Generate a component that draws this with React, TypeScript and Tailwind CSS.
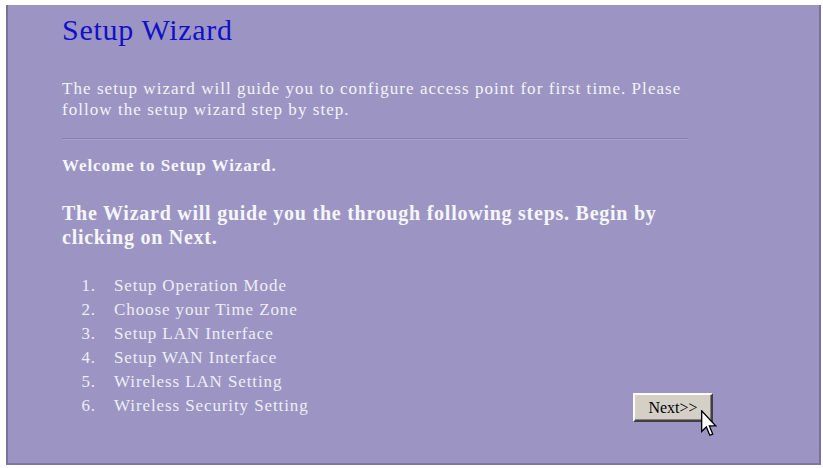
import React from "react";

const steps = [
  "Setup Operation Mode",
  "Choose your Time Zone",
  "Setup LAN Interface",
  "Setup WAN Interface",
  "Wireless LAN Setting",
  "Wireless Security Setting",
];

const Cursor = () => (
  <svg
    className="absolute left-[66px] top-[15px]"
    width="16"
    height="27"
    viewBox="0 0 12 20"
  >
    <path
      d="M0.5 0.5 L0.5 16 L4 12.6 L6.6 18.8 L8.8 17.9 L6.3 11.8 L11 11.8 Z"
      fill="#ffffff"
      stroke="#000000"
      strokeWidth="1"
      strokeLinejoin="miter"
    />
  </svg>
);

export default function App() {
  return (
    <div className="w-[823px] h-[468px] bg-white pt-[5px] pl-[6px] pr-[2px] pb-[3px] flex font-['Liberation_Serif',serif]">
      <div className="flex-1 bg-[#9c95c4] border-l-2 border-l-[#78739c] border-r-2 border-r-[#78739c] border-b-2 border-b-[#7d789f] pl-[54px] pr-[106px] pt-[10px] flex flex-col">
        <h1 className="text-[30px] leading-[30px] tracking-[0.7px] text-[#1010c8]">Setup Wizard</h1>

        <p className="mt-[33px] text-[17px] leading-[21px] tracking-[1.05px] text-[#f3f3f6]">
          The setup wizard will guide you to configure access point for first time. Please
          <br />
          follow the setup wizard step by step.
        </p>

        <div className="mt-[18px] w-[626px] h-[2px] bg-[#857fa9] border-b border-b-[#a9a3cf]" />

        <p className="mt-[15px] text-[17px] leading-[22px] tracking-[0.9px] font-bold text-[#f6f6f8]">
          Welcome to Setup Wizard.
        </p>

        <p className="mt-[24px] text-[20px] leading-[24px] tracking-[0.75px] font-bold text-[#f6f6f8]">
          The Wizard will guide you the through following steps. Begin by
          <br />
          clicking on Next.
        </p>

        <div className="mt-[25px] flex items-end">
          <ol className="flex flex-col text-[17px] leading-[24px] tracking-[0.9px] text-[#eeeef3]">
            {steps.map((step, i) => (
              <li key={step} className="flex">
                <span className="w-[52px] text-right pr-[18px]">{i + 1}.</span>
                <span>{step}</span>
              </li>
            ))}
          </ol>

          <button className="relative ml-auto -mb-[4px] w-[80px] h-[29px] bg-[#d4d0c8] border-2 border-t-white border-l-white border-r-[#404040] border-b-[#404040] shadow-[inset_-1px_-1px_0_#808080] text-[16px] text-black font-['Liberation_Serif',serif]">
            Next&gt;&gt;
            <Cursor />
          </button>
        </div>
      </div>
    </div>
  );
}
